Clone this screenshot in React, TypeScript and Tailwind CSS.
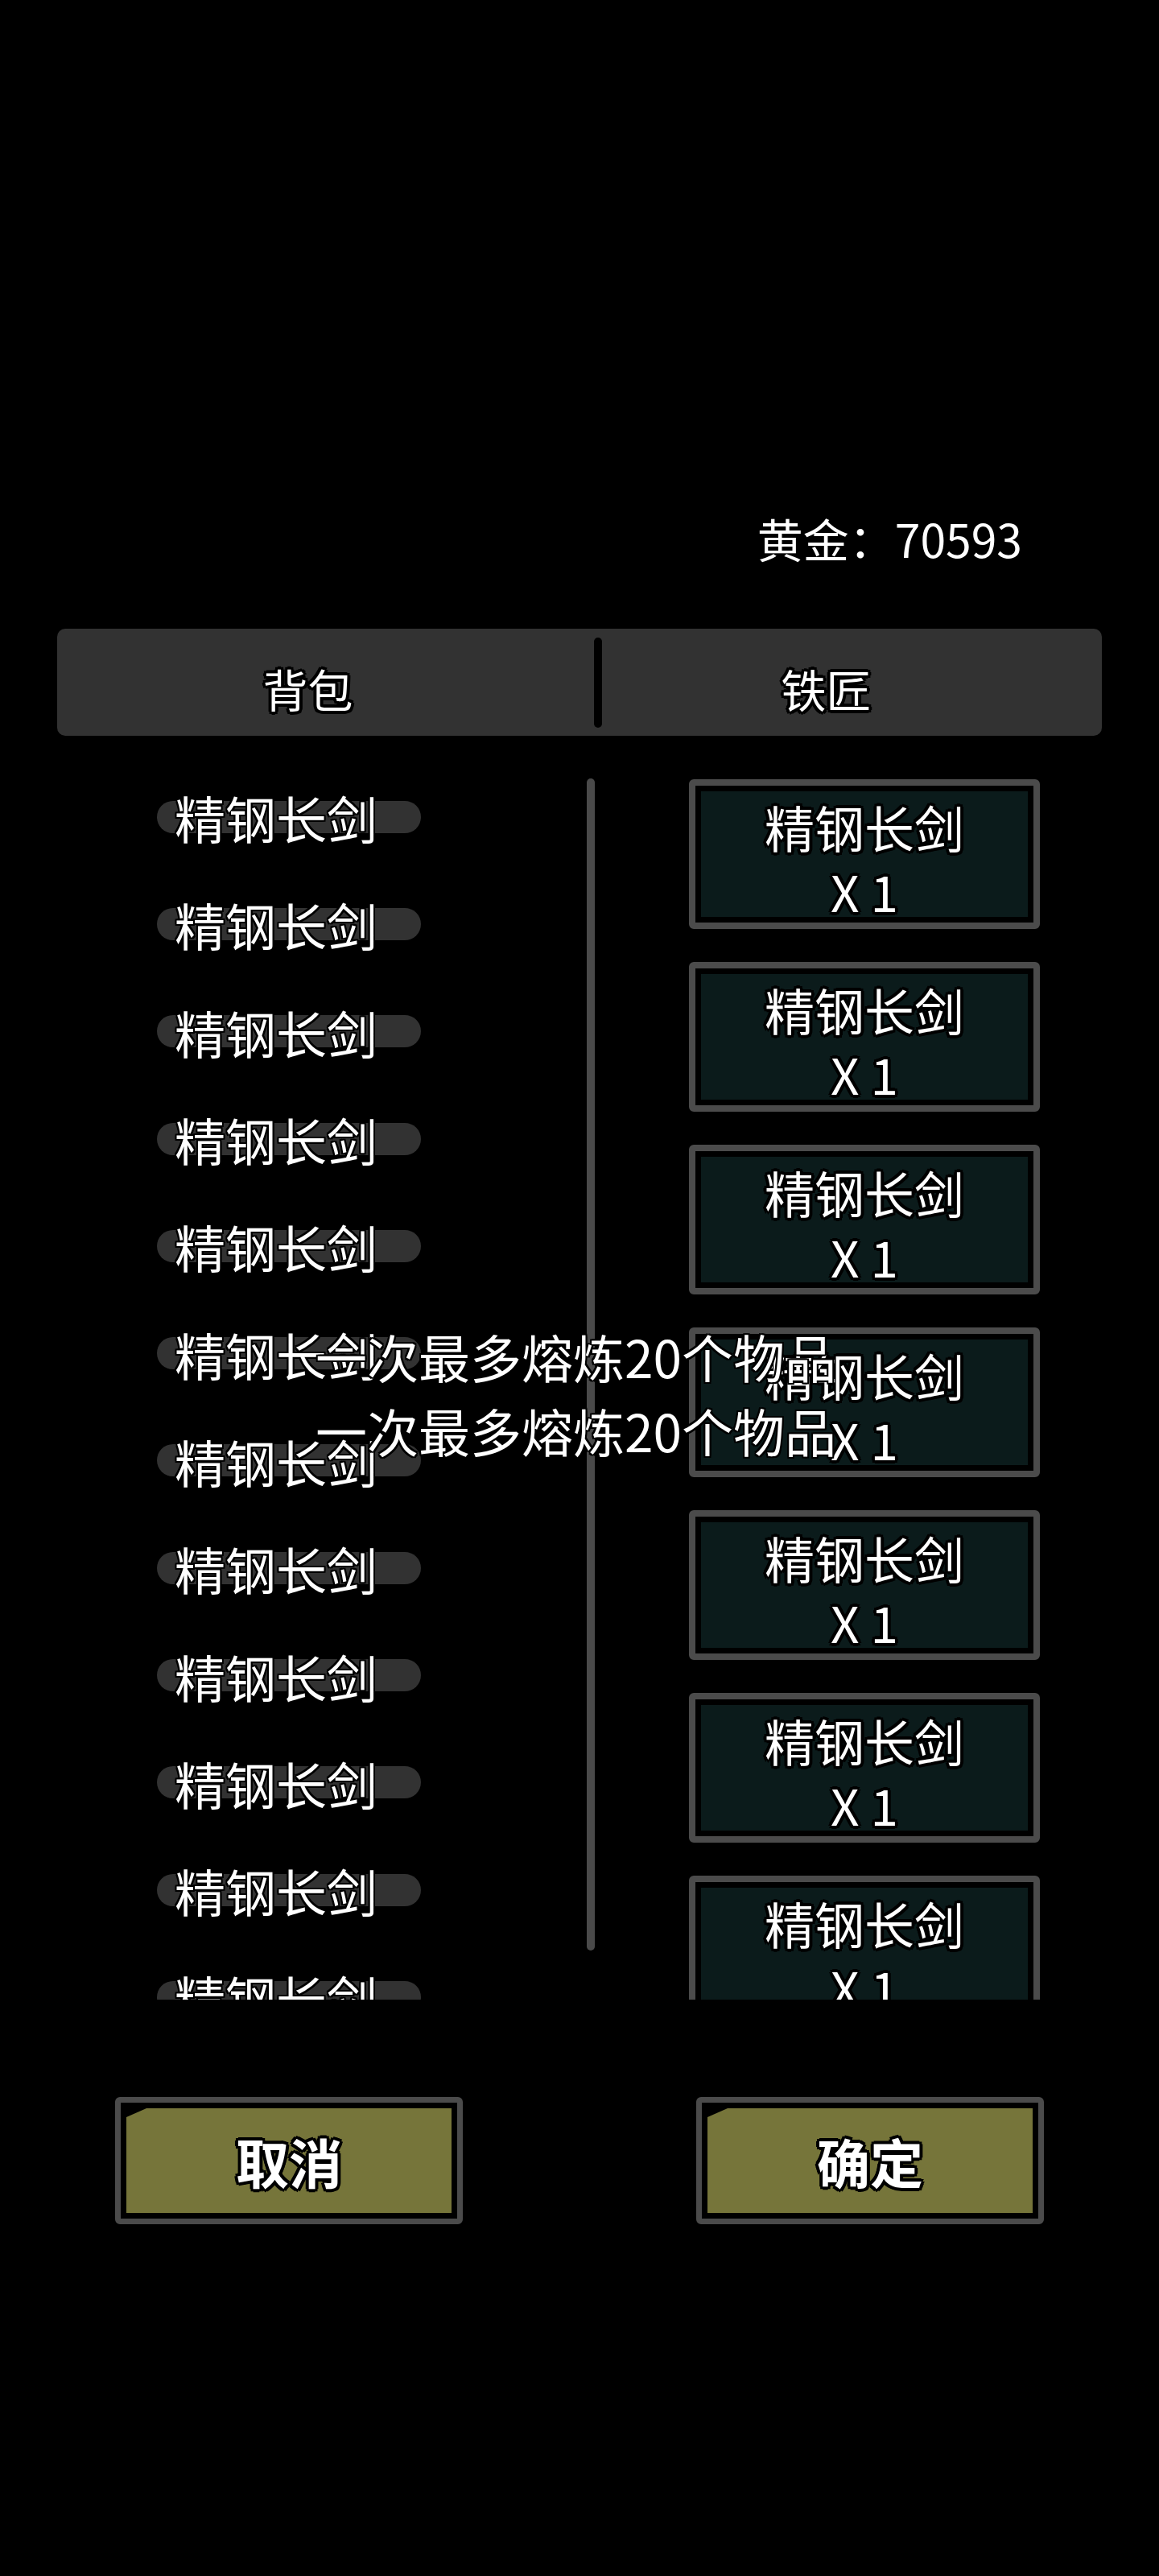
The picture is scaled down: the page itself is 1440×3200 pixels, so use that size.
import React from "react";

const thin =
  "[text-shadow:2px_0_0_#000,-2px_0_0_#000,0_2px_0_#000,0_-2px_0_#000,2px_2px_0_#000,-2px_-2px_0_#000,2px_-2px_0_#000,-2px_2px_0_#000]";
const thick =
  "[text-shadow:4px_0_0_#000,-4px_0_0_#000,0_4px_0_#000,0_-4px_0_#000,3px_3px_0_#000,-3px_-3px_0_#000,3px_-3px_0_#000,-3px_3px_0_#000,2px_0_0_#000,-2px_0_0_#000,0_2px_0_#000,0_-2px_0_#000]";

const bagItems = Array.from({ length: 12 }, () => "精钢长剑");
const smithItems = Array.from({ length: 7 }, () => ({ name: "精钢长剑", count: 1 }));

const BagRow = ({ name }: { name: string }) => {
  return (
    <div className="h-[133.3px] shrink-0 flex items-center">
      <div className="grid items-center">
        <div className="col-start-1 row-start-1 w-[328px] h-[40px] rounded-full bg-[#323232]"></div>
        <div
          className={`col-start-1 row-start-1 ml-[22px] text-[63px] leading-none text-white ${thin}`}
        >
          {name}
        </div>
      </div>
    </div>
  );
};

const SmithCard = ({ name, count }: { name: string; count: number }) => {
  return (
    <div className="w-[436px] h-[186px] shrink-0 rounded-[6px] border-[8px] border-[#4b4b4b] bg-black p-[7px]">
      <div
        className={`h-full bg-[#0b1b1b] flex flex-col items-center pt-[5px] text-[62px] leading-[79px] text-white ${thick}`}
      >
        <span>{name}</span>
        <span>X {count}</span>
      </div>
    </div>
  );
};

const ActionButton = ({ label }: { label: string }) => {
  return (
    <div className="w-[432px] h-[158px] rounded-[6px] border-[7px] border-[#4b4b4b] bg-black p-[7px]">
      <div className="h-full bg-[#76753a] [clip-path:polygon(25px_0,100%_0,100%_100%,0_100%,0_11px)] flex items-center justify-center">
        <span
          className={`text-[66px] font-bold leading-none text-white ${thick}`}
        >
          {label}
        </span>
      </div>
    </div>
  );
};

const App = () => {
  return (
    <div className="relative w-[1440px] h-[3200px] bg-black overflow-hidden font-['Noto_Sans_CJK_SC','Noto_Sans',sans-serif]">
      {/* gold */}
      <div className="pt-[640px] flex justify-end pr-[170px]">
        <div className="text-[57px] leading-none text-white">黄金：70593</div>
      </div>

      {/* tabs */}
      <div className="mt-[84px] mx-[71px] h-[133px] rounded-[10px] bg-[#323232] flex items-center">
        <div className="w-[667px] flex justify-center pr-[44px] pt-[14px]">
          <span className={`text-[56px] leading-none text-white ${thick}`}>背包</span>
        </div>
        <div className="w-[10px] h-[112px] rounded-full bg-black"></div>
        <div className="flex-1 flex justify-center pr-[64px] pt-[14px]">
          <span className={`text-[56px] leading-none text-white ${thick}`}>铁匠</span>
        </div>
      </div>

      {/* lists */}
      <div className="mt-[30px] h-[1540px] overflow-hidden flex">
        <div className="w-[729px] pl-[195px] pt-[4px] flex flex-col">
          {bagItems.map((e, i) => (
            <BagRow name={e} key={i} />
          ))}
        </div>
        <div className="w-[10px] mt-[23px] h-[1456px] rounded-full bg-[#4a4a4a]"></div>
        <div className="pl-[117px] pt-[24px] flex flex-col gap-[41px]">
          {smithItems.map((e, i) => (
            <SmithCard name={e.name} count={e.count} key={i} />
          ))}
        </div>
      </div>

      {/* buttons */}
      <div className="mt-[121px] flex">
        <div className="ml-[143px]">
          <ActionButton label="取消" />
        </div>
        <div className="ml-[290px]">
          <ActionButton label="确定" />
        </div>
      </div>

      {/* toasts */}
      <div
        className={`absolute left-[392px] top-[1652px] text-[64px] leading-none text-white whitespace-nowrap ${thin}`}
      >
        一次最多熔炼20个物品
      </div>
      <div
        className={`absolute left-[392px] top-[1744px] text-[64px] leading-none text-white whitespace-nowrap ${thin}`}
      >
        一次最多熔炼20个物品
      </div>
    </div>
  );
};

export default App;
